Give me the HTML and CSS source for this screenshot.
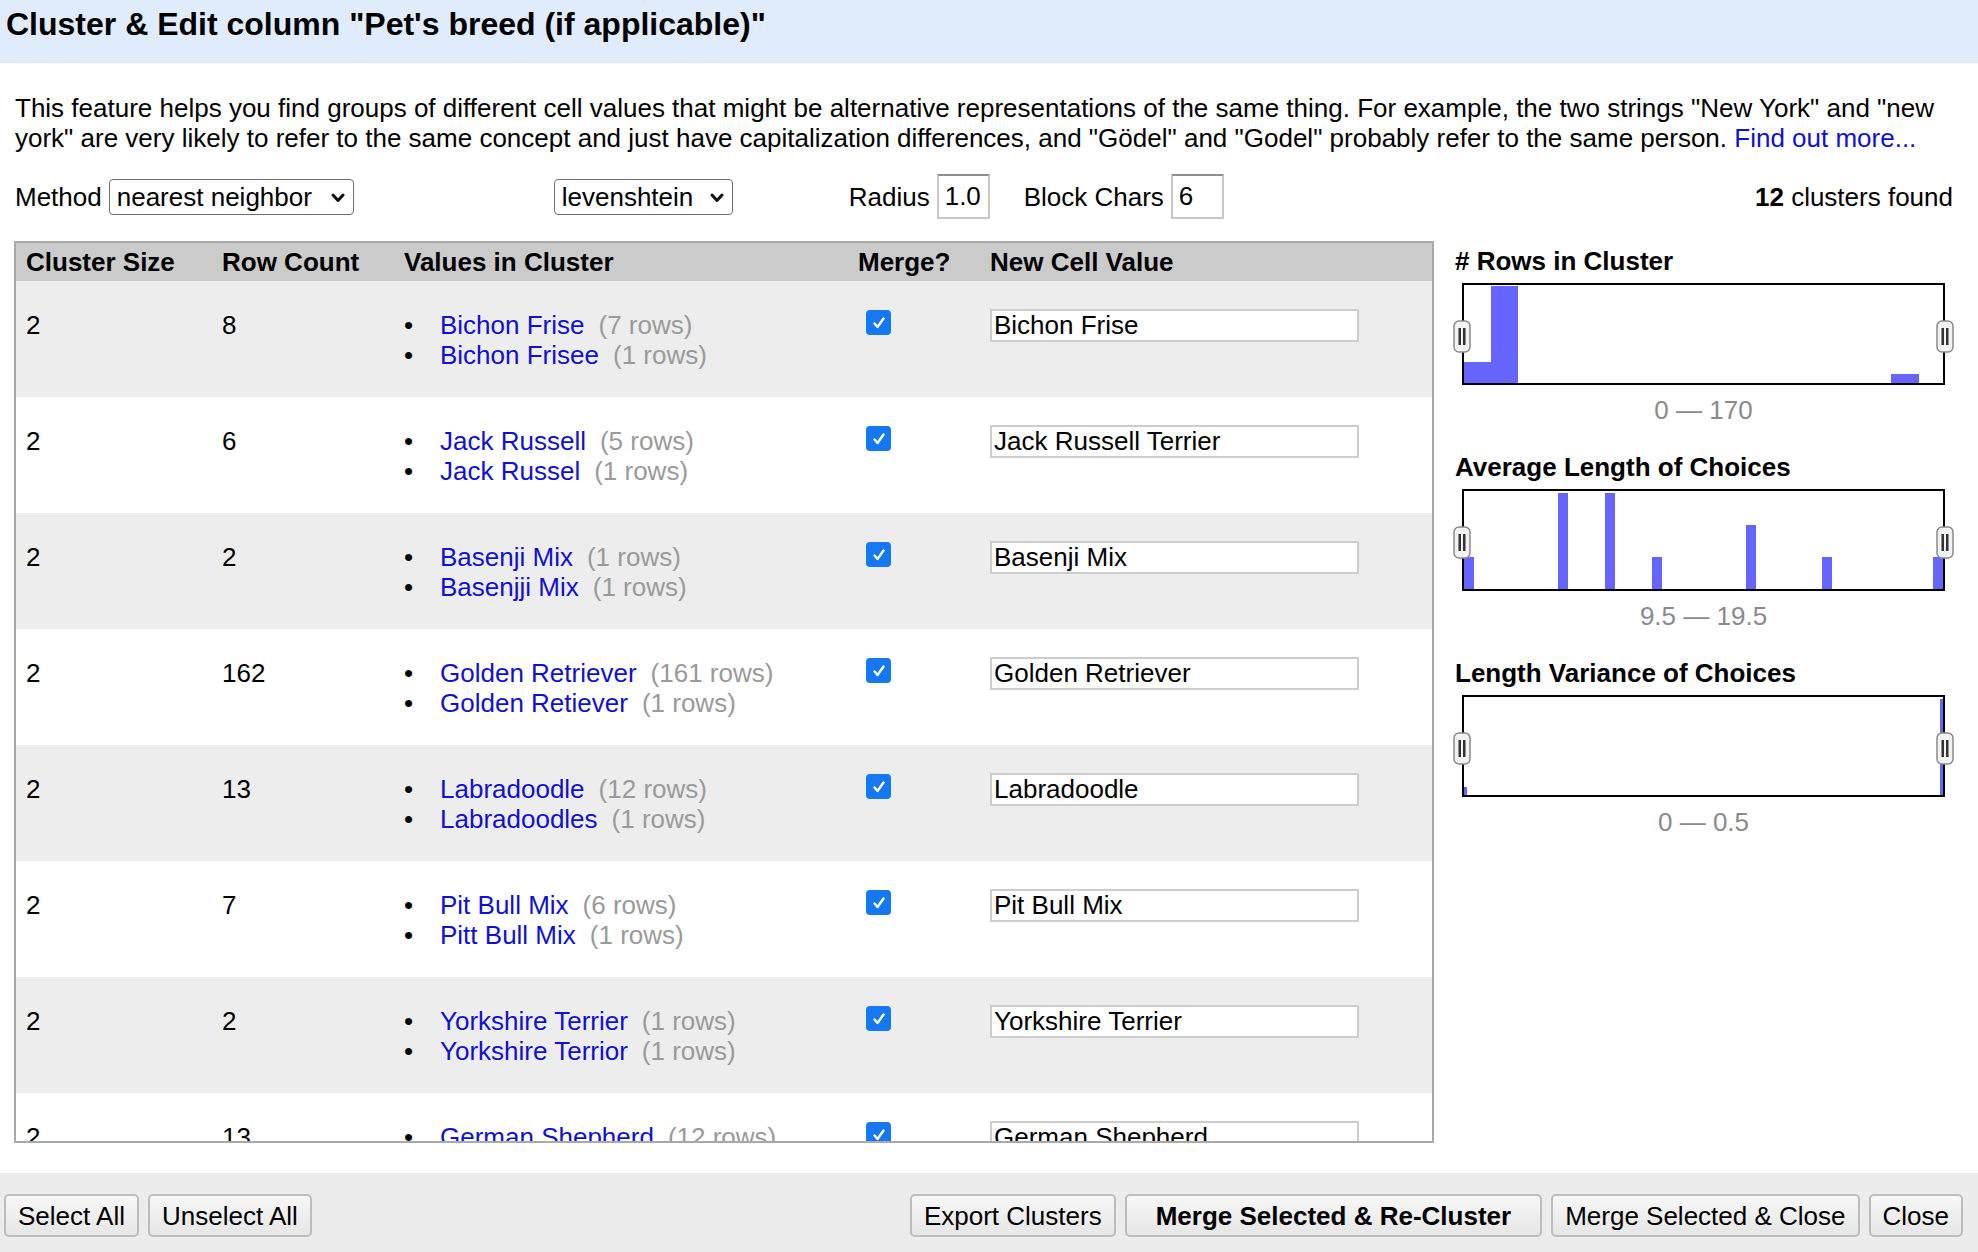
FILE: index.html
```html
<!DOCTYPE html>
<html lang="en">
<head>
<meta charset="utf-8">
<title>Cluster &amp; Edit</title>
<link rel="stylesheet" href="styles.css">
</head>
<body>
<div class="dialog">
  <header class="dialog-header">Cluster &amp; Edit column "Pet's breed (if applicable)"</header>
  <div class="dialog-body">
    <p class="desc">This feature helps you find groups of different cell values that might be alternative representations of the same thing. For example, the two strings "New York" and "new york" are very likely to refer to the same concept and just have capitalization differences, and "Gödel" and "Godel" probably refer to the same person. <a href="#">Find out more...</a></p>
    <div class="controls">
      <span class="lbl">Method</span>
      <div class="select sel-method"><span>nearest neighbor</span><svg class="chev" width="14" height="10" viewBox="0 0 14 10"><polyline points="2,2 7,7.5 12,2" fill="none" stroke="#111" stroke-width="3" stroke-linecap="round" stroke-linejoin="round"/></svg></div>
      <div class="select sel-fn"><span>levenshtein</span><svg class="chev" width="14" height="10" viewBox="0 0 14 10"><polyline points="2,2 7,7.5 12,2" fill="none" stroke="#111" stroke-width="3" stroke-linecap="round" stroke-linejoin="round"/></svg></div>
      <span class="lbl lbl-radius">Radius</span><span class="field">1.0</span>
      <span class="lbl lbl-block">Block Chars</span><span class="field">6</span>
      <span class="found"><b>12</b> clusters found</span>
    </div>
    <div class="main">
      <div class="table-wrap">
        <table class="clusters">
          <colgroup><col class="c1"><col class="c2"><col class="c3"><col class="c4"><col class="c5"></colgroup>
          <thead>
            <tr><th>Cluster Size</th><th>Row Count</th><th>Values in Cluster</th><th>Merge?</th><th>New Cell Value</th></tr>
          </thead>
          <tbody>
            <tr class="odd"><td>2</td><td>8</td><td><ul><li><a href="#">Bichon Frise</a><span class="cnt">(7 rows)</span></li><li><a href="#">Bichon Frisee</a><span class="cnt">(1 rows)</span></li></ul></td><td><span class="cb"><svg width="14" height="14" viewBox="0 0 14 14"><polyline points="2.5,7.5 5.5,11 11.5,2.5" fill="none" stroke="#fff" stroke-width="2.4" stroke-linecap="round" stroke-linejoin="round"/></svg></span></td><td><span class="val">Bichon Frise</span></td></tr>
            <tr><td>2</td><td>6</td><td><ul><li><a href="#">Jack Russell</a><span class="cnt">(5 rows)</span></li><li><a href="#">Jack Russel</a><span class="cnt">(1 rows)</span></li></ul></td><td><span class="cb"><svg width="14" height="14" viewBox="0 0 14 14"><polyline points="2.5,7.5 5.5,11 11.5,2.5" fill="none" stroke="#fff" stroke-width="2.4" stroke-linecap="round" stroke-linejoin="round"/></svg></span></td><td><span class="val">Jack Russell Terrier</span></td></tr>
            <tr class="odd"><td>2</td><td>2</td><td><ul><li><a href="#">Basenji Mix</a><span class="cnt">(1 rows)</span></li><li><a href="#">Basenjji Mix</a><span class="cnt">(1 rows)</span></li></ul></td><td><span class="cb"><svg width="14" height="14" viewBox="0 0 14 14"><polyline points="2.5,7.5 5.5,11 11.5,2.5" fill="none" stroke="#fff" stroke-width="2.4" stroke-linecap="round" stroke-linejoin="round"/></svg></span></td><td><span class="val">Basenji Mix</span></td></tr>
            <tr><td>2</td><td>162</td><td><ul><li><a href="#">Golden Retriever</a><span class="cnt">(161 rows)</span></li><li><a href="#">Golden Retiever</a><span class="cnt">(1 rows)</span></li></ul></td><td><span class="cb"><svg width="14" height="14" viewBox="0 0 14 14"><polyline points="2.5,7.5 5.5,11 11.5,2.5" fill="none" stroke="#fff" stroke-width="2.4" stroke-linecap="round" stroke-linejoin="round"/></svg></span></td><td><span class="val">Golden Retriever</span></td></tr>
            <tr class="odd"><td>2</td><td>13</td><td><ul><li><a href="#">Labradoodle</a><span class="cnt">(12 rows)</span></li><li><a href="#">Labradoodles</a><span class="cnt">(1 rows)</span></li></ul></td><td><span class="cb"><svg width="14" height="14" viewBox="0 0 14 14"><polyline points="2.5,7.5 5.5,11 11.5,2.5" fill="none" stroke="#fff" stroke-width="2.4" stroke-linecap="round" stroke-linejoin="round"/></svg></span></td><td><span class="val">Labradoodle</span></td></tr>
            <tr><td>2</td><td>7</td><td><ul><li><a href="#">Pit Bull Mix</a><span class="cnt">(6 rows)</span></li><li><a href="#">Pitt Bull Mix</a><span class="cnt">(1 rows)</span></li></ul></td><td><span class="cb"><svg width="14" height="14" viewBox="0 0 14 14"><polyline points="2.5,7.5 5.5,11 11.5,2.5" fill="none" stroke="#fff" stroke-width="2.4" stroke-linecap="round" stroke-linejoin="round"/></svg></span></td><td><span class="val">Pit Bull Mix</span></td></tr>
            <tr class="odd"><td>2</td><td>2</td><td><ul><li><a href="#">Yorkshire Terrier</a><span class="cnt">(1 rows)</span></li><li><a href="#">Yorkshire Terrior</a><span class="cnt">(1 rows)</span></li></ul></td><td><span class="cb"><svg width="14" height="14" viewBox="0 0 14 14"><polyline points="2.5,7.5 5.5,11 11.5,2.5" fill="none" stroke="#fff" stroke-width="2.4" stroke-linecap="round" stroke-linejoin="round"/></svg></span></td><td><span class="val">Yorkshire Terrier</span></td></tr>
            <tr><td>2</td><td>13</td><td><ul><li><a href="#">German Shepherd</a><span class="cnt">(12 rows)</span></li><li><a href="#">German Shepard</a><span class="cnt">(1 rows)</span></li></ul></td><td><span class="cb"><svg width="14" height="14" viewBox="0 0 14 14"><polyline points="2.5,7.5 5.5,11 11.5,2.5" fill="none" stroke="#fff" stroke-width="2.4" stroke-linecap="round" stroke-linejoin="round"/></svg></span></td><td><span class="val">German Shepherd</span></td></tr>
          </tbody>
        </table>
      </div>
      <aside class="facets">
        <section class="facet">
          <h3>#&nbsp;Rows in Cluster</h3>
          <div class="chart">
            <svg class="hist" width="479" height="98" viewBox="0 0 479 98">
              <rect x="0" y="77" width="27" height="21" fill="#6666ff"/>
              <rect x="27" y="1" width="27" height="97" fill="#6666ff"/>
              <rect x="427" y="89" width="28" height="9" fill="#6666ff"/>
            </svg>
            <span class="handle left"><svg width="18" height="33" viewBox="0 0 18 33"><rect x="1" y="1" width="16" height="31" rx="5" fill="#f2f2f2" stroke="#8a8a8a" stroke-width="1.5"/><rect x="5.5" y="8" width="2.5" height="17" fill="#333"/><rect x="10" y="8" width="2.5" height="17" fill="#333"/></svg></span>
            <span class="handle right"><svg width="18" height="33" viewBox="0 0 18 33"><rect x="1" y="1" width="16" height="31" rx="5" fill="#f2f2f2" stroke="#8a8a8a" stroke-width="1.5"/><rect x="5.5" y="8" width="2.5" height="17" fill="#333"/><rect x="10" y="8" width="2.5" height="17" fill="#333"/></svg></span>
          </div>
          <div class="range">0 — 170</div>
        </section>
        <section class="facet">
          <h3>Average Length of Choices</h3>
          <div class="chart">
            <svg class="hist" width="479" height="98" viewBox="0 0 479 98">
              <rect x="0" y="66" width="10" height="32" fill="#6666ff"/>
              <rect x="94" y="2" width="10" height="96" fill="#6666ff"/>
              <rect x="141" y="2" width="10" height="96" fill="#6666ff"/>
              <rect x="188" y="66" width="10" height="32" fill="#6666ff"/>
              <rect x="282" y="34" width="10" height="64" fill="#6666ff"/>
              <rect x="358" y="66" width="10" height="32" fill="#6666ff"/>
              <rect x="469" y="66" width="10" height="32" fill="#6666ff"/>
            </svg>
            <span class="handle left"><svg width="18" height="33" viewBox="0 0 18 33"><rect x="1" y="1" width="16" height="31" rx="5" fill="#f2f2f2" stroke="#8a8a8a" stroke-width="1.5"/><rect x="5.5" y="8" width="2.5" height="17" fill="#333"/><rect x="10" y="8" width="2.5" height="17" fill="#333"/></svg></span>
            <span class="handle right"><svg width="18" height="33" viewBox="0 0 18 33"><rect x="1" y="1" width="16" height="31" rx="5" fill="#f2f2f2" stroke="#8a8a8a" stroke-width="1.5"/><rect x="5.5" y="8" width="2.5" height="17" fill="#333"/><rect x="10" y="8" width="2.5" height="17" fill="#333"/></svg></span>
          </div>
          <div class="range">9.5 — 19.5</div>
        </section>
        <section class="facet">
          <h3>Length Variance of Choices</h3>
          <div class="chart">
            <svg class="hist" width="479" height="98" viewBox="0 0 479 98">
              <rect x="0" y="90" width="3" height="8" fill="#6666ff"/>
              <rect x="476" y="2" width="3" height="96" fill="#6666ff"/>
            </svg>
            <span class="handle left"><svg width="18" height="33" viewBox="0 0 18 33"><rect x="1" y="1" width="16" height="31" rx="5" fill="#f2f2f2" stroke="#8a8a8a" stroke-width="1.5"/><rect x="5.5" y="8" width="2.5" height="17" fill="#333"/><rect x="10" y="8" width="2.5" height="17" fill="#333"/></svg></span>
            <span class="handle right"><svg width="18" height="33" viewBox="0 0 18 33"><rect x="1" y="1" width="16" height="31" rx="5" fill="#f2f2f2" stroke="#8a8a8a" stroke-width="1.5"/><rect x="5.5" y="8" width="2.5" height="17" fill="#333"/><rect x="10" y="8" width="2.5" height="17" fill="#333"/></svg></span>
          </div>
          <div class="range">0 — 0.5</div>
        </section>
      </aside>
    </div>
  </div>
  <footer class="dialog-footer">
    <div class="btn-group">
      <button class="btn">Select All</button>
      <button class="btn">Unselect All</button>
    </div>
    <div class="btn-group right">
      <button class="btn">Export Clusters</button>
      <button class="btn primary">Merge Selected &amp; Re-Cluster</button>
      <button class="btn">Merge Selected &amp; Close</button>
      <button class="btn">Close</button>
    </div>
  </footer>
</div>
</body>
</html>
```
FILE: styles.css
```css
* { box-sizing: border-box; }
html, body { margin: 0; padding: 0; }
body {
  font-family: "Liberation Sans", Arial, Helvetica, sans-serif;
  font-size: 26px;
  line-height: 30px;
  color: #000;
  background: #fff;
}
a { color: #1111cc; text-decoration: none; }

.dialog {
  height: 1252px;
  display: flex;
  flex-direction: column;
  overflow: hidden;
}
.dialog-header {
  height: 63px;
  flex: none;
  background: #e0ebfc;
  font-weight: bold;
  font-size: 32px;
  line-height: 37px;
  padding: 6px 6px 0;
}
.dialog-body {
  flex: 1;
  padding: 0 25px 0 14px;
}
.desc {
  margin: 30px 0 0 1px;
  line-height: 30px;
}
.controls {
  display: flex;
  align-items: center;
  height: 45px;
  margin-top: 21px;
  padding-left: 1px;
}
.select {
  display: flex;
  align-items: center;
  justify-content: space-between;
  height: 36px;
  border: 1px solid #6f6f6f;
  border-radius: 4px;
  padding: 0 8px 0 7px;
  background: #fff;
}
.sel-method { width: 245px; margin-left: 7px; }
.sel-fn { width: 179px; margin-left: 200px; }
.chev { margin-top: 2px; }
.lbl-radius { margin-left: 116px; }
.lbl-block { margin-left: 34px; }
.field {
  width: 53px;
  height: 45px;
  margin-left: 7px;
  border: 2px solid #c8c8c8;
  border-top-color: #8e8e8e;
  padding: 5px 0 0 6px;
  line-height: 30px;
  background: #fff;
}
.found { margin-left: auto; }

.main {
  display: flex;
  margin-top: 22px;
  gap: 21px;
}
.table-wrap {
  width: 1420px;
  height: 902px;
  border: 2px solid #a9a9a9;
  overflow: hidden;
  flex: none;
}
.clusters {
  width: 100%;
  border-collapse: collapse;
  table-layout: fixed;
}
.c1 { width: 196px; }
.c2 { width: 182px; }
.c3 { width: 454px; }
.c4 { width: 132px; }
.clusters th {
  background: #cbcbcb;
  height: 38px;
  padding: 0 0 0 10px;
  text-align: left;
  font-weight: bold;
  vertical-align: middle;
}
.clusters td {
  padding: 29px 0 27px 10px;
  vertical-align: top;
  height: 116px;
}
.clusters tr.odd td { background: #ededed; }
.clusters ul { list-style: none; margin: 0; padding: 0; }
.clusters li { white-space: nowrap; }
.clusters li::before {
  content: "•";
  display: inline-block;
  width: 36px;
}
.cnt { color: #9a9a9a; margin-left: 14px; }
.cb {
  display: inline-flex;
  align-items: center;
  justify-content: center;
  width: 25px;
  height: 25px;
  margin-left: 8px;
  border-radius: 4px;
  background: #1677f2;
  vertical-align: top;
}
.val {
  display: block;
  width: 369px;
  height: 33px;
  margin-top: -1px;
  border: 2px solid #cdcdcd;
  padding: 0 0 0 2px;
  line-height: 29px;
  background: #fff;
  white-space: nowrap;
  overflow: hidden;
}

.facets {
  width: 498px;
  padding-top: 5px;
}
.facet h3 {
  margin: 0;
  font-size: 26px;
  line-height: 30px;
  font-weight: bold;
}
.chart {
  position: relative;
  width: 483px;
  height: 102px;
  margin: 7px 0 0 7px;
  border: 2px solid #000;
}
.hist { display: block; }
.handle {
  position: absolute;
  top: 35px;
  width: 18px;
  height: 33px;
}
.handle svg { display: block; }
.handle.left { left: -11px; }
.handle.right { right: -11px; }
.range {
  width: 483px;
  margin: 10px 0 27px 7px;
  text-align: center;
  color: #8a8a8a;
}

.dialog-footer {
  height: 79px;
  flex: none;
  background: #ececec;
  display: flex;
  align-items: flex-start;
  padding: 21px 15px 0 4px;
}
.btn-group { display: flex; gap: 9px; }
.btn-group.right { margin-left: auto; gap: 9px; }
.btn {
  font-family: inherit;
  font-size: 26px;
  height: 43px;
  padding: 0 12px;
  border: 2px solid #bdbdbd;
  border-radius: 5px;
  background: linear-gradient(#f7f7f7, #e6e6e6);
  color: #000;
  line-height: 30px;
}
.btn.primary { font-weight: bold; padding: 0 29px; }
```
